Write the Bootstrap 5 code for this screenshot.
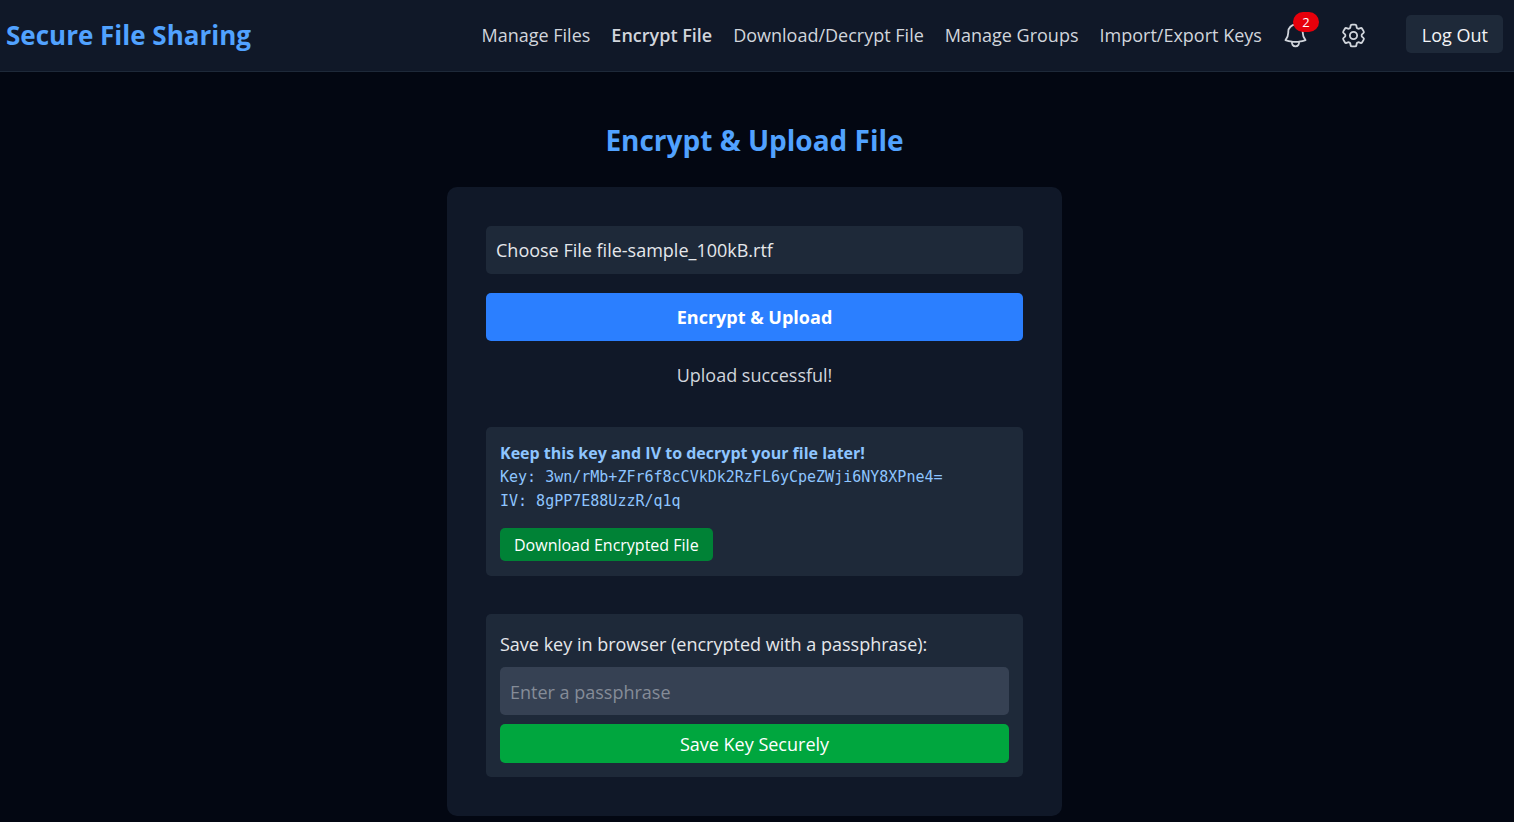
<!DOCTYPE html>
<html lang="en">
<head>
<meta charset="utf-8">
<meta name="viewport" content="width=device-width, initial-scale=1">
<title>Encrypt &amp; Upload File</title>
<link href="https://cdn.jsdelivr.net/npm/bootstrap@5.3.0/dist/css/bootstrap.min.css" rel="stylesheet">
<style>
  body { background: #030712; color: #e5e7eb; font: 18px/28px "Open Sans", "Noto Sans", sans-serif; }
  .topbar { background: #101828; border-bottom: 1px solid #1e2939; min-height: 72px; padding: 0 11px 1px 6px; }
  .brand { color: #51a2ff; font-size: 26px; font-weight: 700; line-height: 40px; }
  .brand:hover { color: #8ec5ff; }
  .menu { gap: 19px; }
  .menu-links { gap: 21px; }
  .menu-link { color: #d1d5dc; text-decoration: none; white-space: nowrap; }
  .menu-link.active { font-weight: 600; }
  .menu-link:hover { color: #51a2ff; }
  .icon-btn { background: none; border: 0; padding: 0; color: #d1d5dc; display: flex; }
  .icon-btn svg { width: 29px; height: 29px; }
  .settings { margin: 0 19px 0 10px; }
  .count { position: absolute; top: -9px; right: -9px; min-width: 26px; border-radius: 10px; background: #e7000b; color: #fff; font-size: 13px; line-height: 20px; text-align: center; }
  .logout { background: #1e2939; color: #f3f4f6; border: 0; border-radius: 5px; font-size: 18px; line-height: 28px; padding: 6px 15px 4px 16px; margin-bottom: 2px; }
  .page-body { padding: 47px 5px 6px 0; }
  .page-title { color: #51a2ff; font-size: 28px; line-height: 42px; font-weight: 700; margin-bottom: 26px; }
  .sheet { background: #101828; border-radius: 10px; width: 100%; max-width: 615px; padding: 39px; }
  .field { display: block; width: 100%; border: 0; border-radius: 5px; background: #1e2939; color: #e5e7eb; font-size: 18px; line-height: 28px; padding: 10px; }
  .action { font-size: 18px; line-height: 28px; border: 0; border-radius: 5px; color: #fff; }
  .action:hover { color: #fff; filter: brightness(1.1); }
  .upload { background: #2b7fff; padding: 10px; margin-top: 19px; font-weight: 700; }
  .status { color: #d1d5dc; margin: 20px 0 38px; }
  .panel { background: #1e2939; border-radius: 5px; padding: 14px; }
  .secrets { color: #8ec5ff; font-size: 16px; line-height: 24px; padding-bottom: 15px; margin-bottom: 38px; }
  .secrets code { display: block; color: inherit; font: 15px/24px "DejaVu Sans Mono", monospace; overflow-wrap: anywhere; }
  .download { background: #008236; font-size: 16px; line-height: 23px; padding: 6px 14px 4px; margin-top: 15px; }
  .passphrase-label { padding-top: 2px; }
  .passphrase { background: #364153; margin: 9px 0; padding: 11px 10px 9px; }
  .passphrase::placeholder { color: #858c98; opacity: 1; }
  .save { background: #00a63e; padding: 6px 5px 4px; line-height: 29px; }
</style>
</head>
<body>
<header class="topbar d-flex flex-wrap align-items-center justify-content-between">
  <a class="brand text-decoration-none" href="#">Secure File Sharing</a>
  <nav class="menu d-flex flex-wrap align-items-center">
    <div class="menu-links d-flex flex-wrap">
      <a class="menu-link" href="#">Manage Files</a>
      <a class="menu-link active" href="#" aria-current="page">Encrypt File</a>
      <a class="menu-link" href="#">Download/Decrypt File</a>
      <a class="menu-link" href="#">Manage Groups</a>
      <a class="menu-link" href="#">Import/Export Keys</a>
    </div>
    <button class="icon-btn position-relative" type="button" aria-label="Notifications">
      <svg viewBox="0 0 24 24" fill="none" stroke="currentColor" stroke-width="1.5" stroke-linecap="round" stroke-linejoin="round" aria-hidden="true"><path d="M14.857 17.082a23.848 23.848 0 0 0 5.454-1.31A8.967 8.967 0 0 1 18 9.75V9A6 6 0 0 0 6 9v.75a8.967 8.967 0 0 1-2.312 6.022c1.733.64 3.56 1.085 5.455 1.31m5.714 0a24.255 24.255 0 0 1-5.714 0m5.714 0a3 3 0 1 1-5.714 0"/></svg>
      <span class="count">2</span>
    </button>
    <button class="icon-btn settings" type="button" aria-label="Settings">
      <svg viewBox="0 0 24 24" fill="none" stroke="currentColor" stroke-width="1.5" stroke-linecap="round" stroke-linejoin="round" aria-hidden="true"><path d="M9.594 3.94c.09-.542.56-.94 1.11-.94h2.593c.55 0 1.02.398 1.11.94l.213 1.281c.063.374.313.686.645.87.074.04.147.083.22.127.325.196.72.257 1.075.124l1.217-.456a1.125 1.125 0 0 1 1.37.49l1.296 2.247a1.125 1.125 0 0 1-.26 1.431l-1.003.827c-.293.241-.438.613-.43.992a7.723 7.723 0 0 1 0 .255c-.008.378.137.75.43.991l1.004.827c.424.35.534.955.26 1.43l-1.298 2.247a1.125 1.125 0 0 1-1.369.491l-1.217-.456c-.355-.133-.75-.072-1.076.124a6.47 6.47 0 0 1-.22.128c-.331.183-.581.495-.644.869l-.213 1.281c-.09.543-.56.94-1.11.94h-2.594c-.55 0-1.019-.398-1.11-.94l-.213-1.281c-.062-.374-.312-.686-.644-.87a6.52 6.52 0 0 1-.22-.127c-.325-.196-.72-.257-1.076-.124l-1.217.456a1.125 1.125 0 0 1-1.369-.49l-1.297-2.247a1.125 1.125 0 0 1 .26-1.431l1.004-.827c.292-.24.437-.613.43-.991a6.932 6.932 0 0 1 0-.255c.007-.38-.138-.751-.43-.992l-1.004-.827a1.125 1.125 0 0 1-.26-1.43l1.297-2.247a1.125 1.125 0 0 1 1.37-.491l1.216.456c.356.133.751.072 1.076-.124.072-.044.146-.086.22-.128.332-.183.582-.495.644-.869l.214-1.28Z"/><path d="M15 12a3 3 0 1 1-6 0 3 3 0 0 1 6 0Z"/></svg>
    </button>
    <button class="logout" type="button">Log Out</button>
  </nav>
</header>
<main class="page-body d-flex flex-column align-items-center">
  <h1 class="page-title">Encrypt &amp; Upload File</h1>
  <div class="sheet">
    <form>
      <input class="visually-hidden" type="file" id="sourceFile">
      <label class="field" for="sourceFile">Choose File file-sample_100kB.rtf</label>
      <button class="action upload w-100" type="button">Encrypt &amp; Upload</button>
    </form>
    <p class="status text-center" role="status">Upload successful!</p>
    <section class="panel secrets">
      <strong class="d-block">Keep this key and IV to decrypt your file later!</strong>
      <code>Key: 3wn/rMb+ZFr6f8cCVkDk2RzFL6yCpeZWji6NY8XPne4=</code>
      <code>IV: 8gPP7E88UzzR/q1q</code>
      <button class="action download d-block" type="button">Download Encrypted File</button>
    </section>
    <form class="panel">
      <label class="passphrase-label d-block" for="passphrase">Save key in browser (encrypted with a passphrase):</label>
      <input class="field passphrase" type="password" id="passphrase" placeholder="Enter a passphrase" autocomplete="new-password">
      <button class="action save w-100" type="button">Save Key Securely</button>
    </form>
  </div>
</main>
<script src="https://cdn.jsdelivr.net/npm/bootstrap@5.3.0/dist/js/bootstrap.bundle.min.js"></script>
</body>
</html>
